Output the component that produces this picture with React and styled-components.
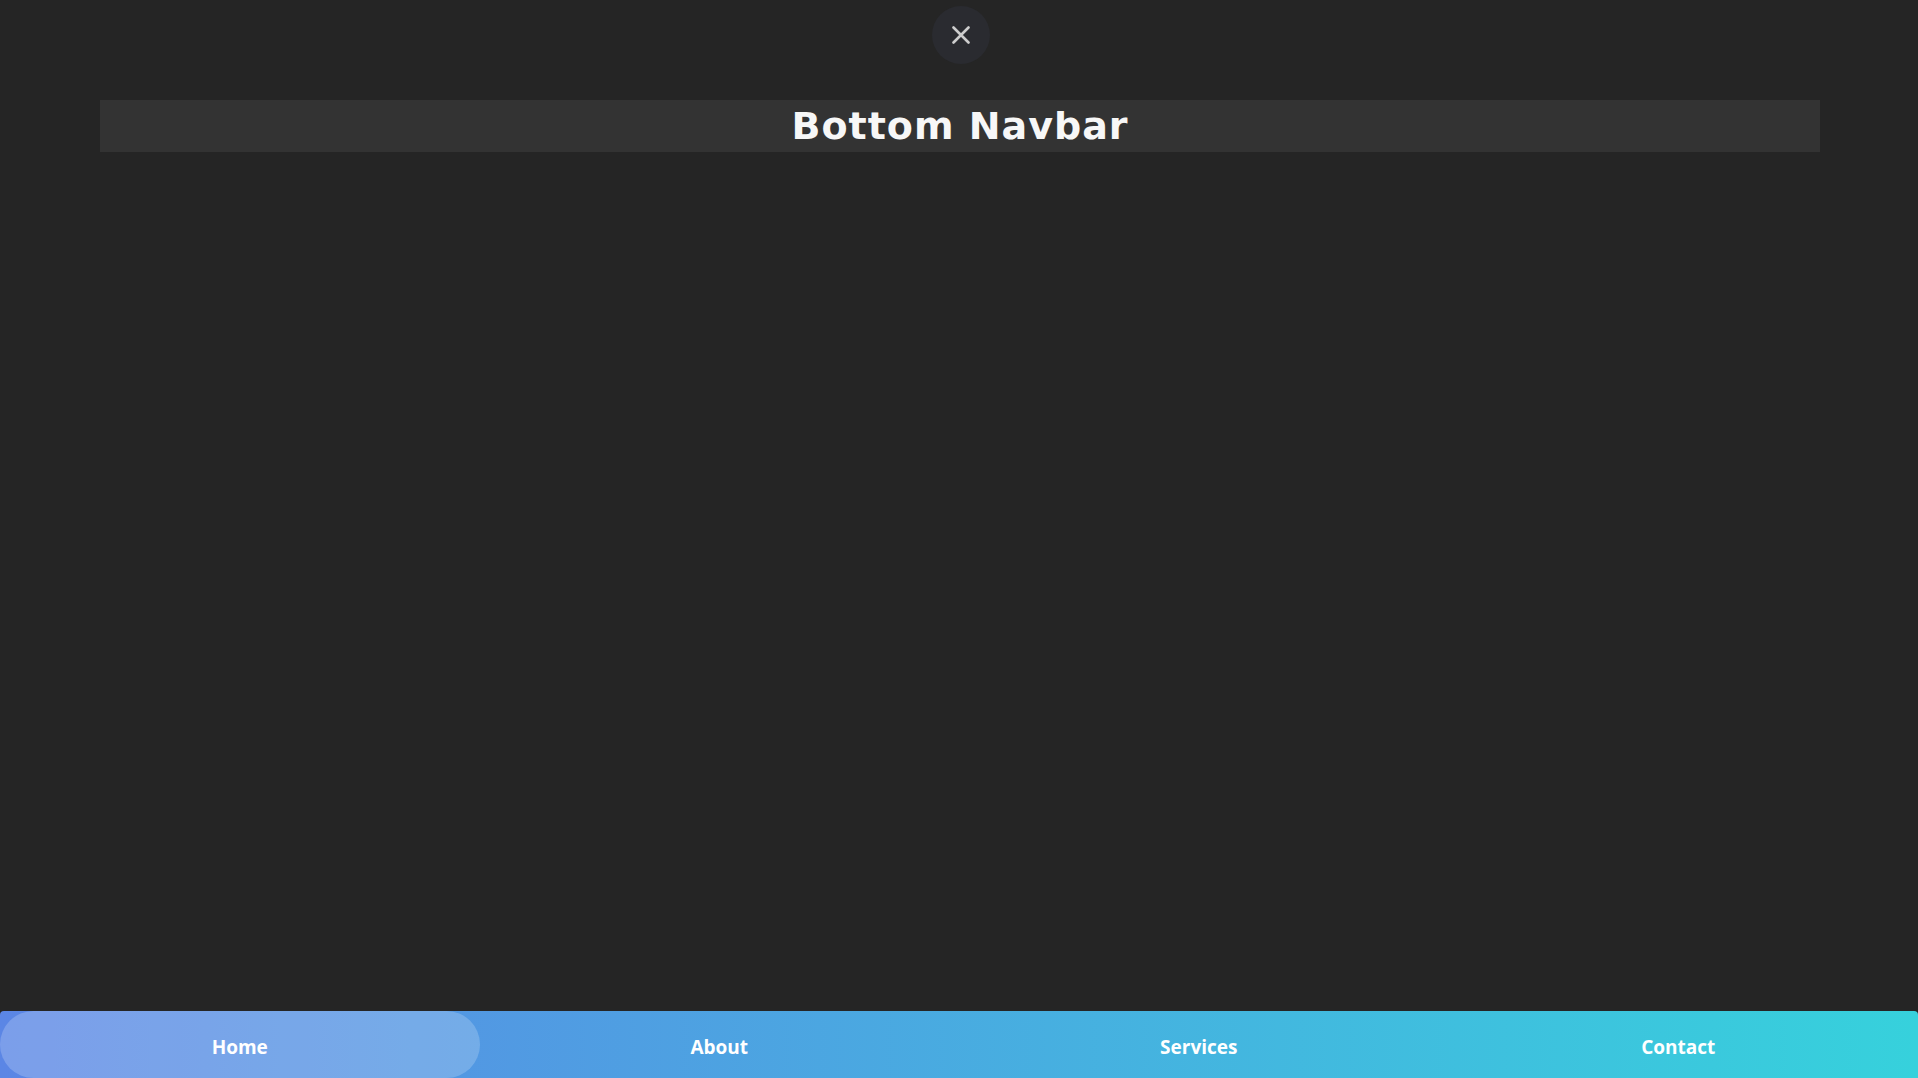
import React, { useState } from "react";
import styled, { createGlobalStyle } from "styled-components";

const GlobalStyle = createGlobalStyle`
  html, body {
    margin: 0;
    padding: 0;
    background: #252525;
  }
  * { box-sizing: border-box; }
`;

const items = ["Home", "About", "Services", "Contact"];

export default function App() {
  const [active, setActive] = useState(0);

  return (
    <>
      <GlobalStyle />
      <Page>
        <TopRow>
          <CloseButton aria-label="close">
            <svg width="18" height="18" viewBox="0 0 18 18">
              <path d="M1.5 1.5 L16.5 16.5 M16.5 1.5 L1.5 16.5" stroke="#cdcdcd" strokeWidth="2.6" strokeLinecap="round" />
            </svg>
          </CloseButton>
        </TopRow>

        <TitleBar>
          <h1>Bottom Navbar</h1>
        </TitleBar>

        <Navbar>
          {items.map((label, i) => (
            <NavItem key={label} $active={i === active} onClick={() => setActive(i)}>
              {label}
            </NavItem>
          ))}
        </Navbar>
      </Page>
    </>
  );
}

const Page = styled.div`
  height: 100vh;
  display: flex;
  flex-direction: column;
  background: #252525;
`;

const TopRow = styled.div`
  display: flex;
  justify-content: center;
  padding-top: 6px;
  padding-left: 3px;
`;

const CloseButton = styled.button`
  width: 58px;
  height: 58px;
  border-radius: 50%;
  border: none;
  background: #2a2b30;
  display: flex;
  align-items: center;
  justify-content: center;
  padding: 0;
  cursor: pointer;
`;

const TitleBar = styled.div`
  margin: 36px 98px 0 100px;
  height: 52px;
  background: #333333;
  display: flex;
  align-items: center;
  justify-content: center;

  h1 {
    margin: 0;
    font-family: "DejaVu Sans", Verdana, sans-serif;
    font-weight: 600;
    font-size: 38px;
    letter-spacing: 1px;
    color: #f7f7f7;
    line-height: 1;
  }
`;

const Navbar = styled.nav`
  margin-top: auto;
  height: 67px;
  display: grid;
  grid-template-columns: repeat(4, 1fr);
  background: linear-gradient(to right, #5b86e5, #36d1dc);
  border-radius: 4px 4px 0 0;
`;

const NavItem = styled.div`
  display: flex;
  align-items: center;
  justify-content: center;
  padding-top: 5px;
  font-family: "Open Sans", "Noto Sans", sans-serif;
  font-weight: 700;
  font-size: 19px;
  color: #ffffff;
  border-radius: 9999px;
  cursor: pointer;
  background: ${(p) => (p.$active ? "rgba(255, 255, 255, 0.2)" : "transparent")};
`;
